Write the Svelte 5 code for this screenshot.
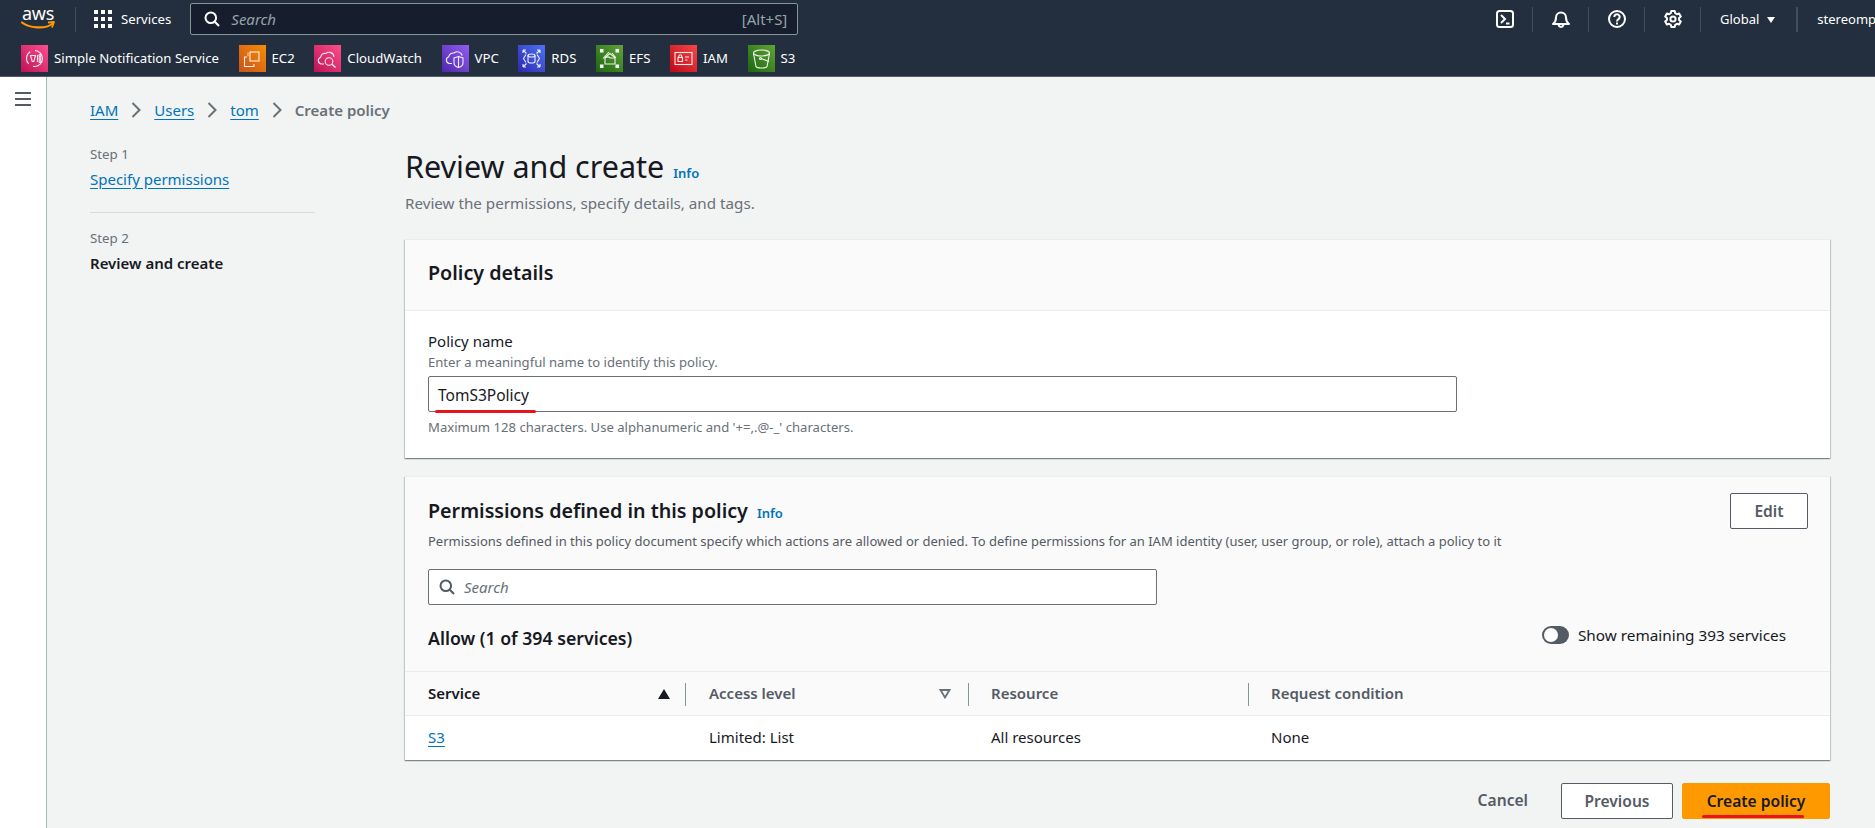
<script>
  const shortcuts = [
    { name: "Simple Notification Service", icon: "sns", from: "#ff4f8b", to: "#bc1356" },
    { name: "EC2", icon: "ec2", from: "#f78e04", to: "#c8511b" },
    { name: "CloudWatch", icon: "cw", from: "#ff4f8b", to: "#bc1356" },
    { name: "VPC", icon: "vpc", from: "#945df2", to: "#4d27aa" },
    { name: "RDS", icon: "rds", from: "#4d72f3", to: "#2e27ad" },
    { name: "EFS", icon: "efs", from: "#60a337", to: "#1b660f" },
    { name: "IAM", icon: "iam", from: "#f54749", to: "#bd0816" },
    { name: "S3", icon: "s3", from: "#60a337", to: "#1b660f" }
  ];

  const columns = [
    { label: "Service", sort: "asc" },
    { label: "Access level", sort: "none" },
    { label: "Resource" },
    { label: "Request condition" }
  ];

  const row = ["S3", "Limited: List", "All resources", "None"];
</script>

<header class="topbar">
  <div class="row-main">
    <div class="logo">
      <span class="logo-text">aws</span>
      <svg class="smile" viewBox="0 0 34 10" width="34" height="10">
        <path d="M1 1.5C8 7 24 8.5 31 3" fill="none" stroke="#f90" stroke-width="2.2" stroke-linecap="round" />
        <path d="M27 1.5l6-.5-2 5.5" fill="none" stroke="#f90" stroke-width="1.8" stroke-linejoin="round" />
      </svg>
    </div>
    <span class="sep sep-logo"></span>
    <svg class="grid-icon" viewBox="0 0 18 18" width="18" height="18" fill="#fff">
      {#each [0, 7, 14] as y}
        {#each [0, 7, 14] as x}
          <rect {x} {y} width="4" height="4" />
        {/each}
      {/each}
    </svg>
    <span class="services">Services</span>
    <div class="global-search">
      <svg viewBox="0 0 16 16" width="16" height="16" fill="none" stroke="#fff" stroke-width="2">
        <circle cx="6.8" cy="6.8" r="5.3" />
        <path d="M10.8 10.8L15 15" />
      </svg>
      <span class="search-text">Search</span>
      <span class="search-key">[Alt+S]</span>
    </div>
    <div class="top-right">
      <svg class="tool" viewBox="0 0 18 18" width="18" height="18" fill="none" stroke="#fff" stroke-width="2">
        <rect x="1" y="1" width="16" height="16" rx="2.5" />
        <path d="M5 5l4 4-4 4" />
        <path d="M10 13.5h3.5" />
      </svg>
      <span class="sep"></span>
      <svg class="tool" viewBox="0 0 18 18" width="18" height="18" fill="none" stroke="#fff" stroke-width="2">
        <path d="M1 14c2-1.5 3-3 3-6.500a5 5 0 0 1 10 0c0 3.500 1 5 3 6.500z" stroke-linejoin="round" />
        <path d="M6.500 15a2.600 2.600 0 0 0 5 0" />
      </svg>
      <span class="sep"></span>
      <svg class="tool" viewBox="0 0 18 18" width="18" height="18" fill="none" stroke="#fff" stroke-width="2">
        <circle cx="9" cy="9" r="8" />
        <path d="M6.300 7a2.700 2.700 0 1 1 4.200 2.200C9.500 9.900 9 10.300 9 11.500" />
        <path d="M9 12.600v1.800" />
      </svg>
      <span class="sep"></span>
      <svg class="tool" viewBox="0 0 18 18" width="18" height="18" fill="none" stroke="#fff" stroke-width="2">
        <circle cx="9" cy="9" r="2.600" />
        <path d="M7.300 1h3.400l.5 2.200 1.700 1 2.200-.7 1.700 3-1.700 1.500v2l1.700 1.500-1.700 3-2.200-.7-1.700 1-.5 2.200H7.300l-.5-2.200-1.700-1-2.200.7-1.700-3L2.900 10V8L1.200 6.500l1.700-3 2.200.7 1.700-1z" stroke-linejoin="round" />
      </svg>
      <span class="sep"></span>
      <span class="region">Global</span>
      <svg class="caret" viewBox="0 0 8 6" width="8" height="6" fill="#fff"><path d="M0 0h8L4 6z" /></svg>
      <span class="sep sep-thick"></span>
      <span class="account">stereomp</span>
    </div>
  </div>
  <nav class="row-shortcuts">
    {#each shortcuts as s}
      <div class="shortcut">
        <span class="svc-icon" style="background: linear-gradient(45deg, {s.to}, {s.from})">
          <svg viewBox="0 0 27 27" width="27" height="27" fill="none" stroke="#fff" stroke-width="1.100" stroke-opacity="0.9">
            {#if s.icon === "sns"}
              <circle cx="13.500" cy="13.500" r="8" stroke-dasharray="14 5" />
              <path d="M9.500 10.500h5l-1.700 6h-1.600zM16.500 10v7" />
              <circle cx="19" cy="10.500" r="1" />
              <circle cx="19" cy="13.500" r="1" />
              <circle cx="19" cy="16.500" r="1" />
            {:else if s.icon === "ec2"}
              <rect x="11" y="7" width="9" height="9" />
              <path d="M8 12H5.500v9.500H15V19" />
              <path d="M8.500 8.500h1M8.500 10.500h1" stroke-width="1.400" />
            {:else if s.icon === "cw"}
              <path d="M10 19H7.500a3.500 3.500 0 0 1-.8-6.800 4 4 0 0 1 5-3.700 5 5 0 0 1 8.300 3.400" />
              <circle cx="15" cy="16.500" r="3.800" />
              <path d="M18 19.200l3.500 3.300" stroke-width="1.500" />
            {:else if s.icon === "vpc"}
              <path d="M10 18.500H7.500a3.500 3.500 0 0 1-.7-6.800 4.500 4.500 0 0 1 5.200-3.700 5 5 0 0 1 8.200 2.500" />
              <path d="M16.500 11.500l4.500 1.500v5c0 2.300-2 3.800-4.500 4.500-2.500-.7-4.500-2.200-4.500-4.500v-5z" />
              <path d="M16.500 11.500v11" />
            {:else if s.icon === "rds"}
              <ellipse cx="13.500" cy="10.500" rx="3.500" ry="1.500" />
              <path d="M10 10.500v6c0 .8 1.500 1.500 3.500 1.500s3.500-.7 3.500-1.500v-6" />
              <path d="M8 9.500l-2.500 4 2.500 4M19 9.500l2.500 4-2.500 4" />
              <path d="M5 5l3.500 3.500M5 5v3M5 5h3M22 5l-3.500 3.500M22 5v3M22 5h-3M5 22l3.500-3.500M5 22v-3M5 22h3M22 22l-3.500-3.500M22 22v-3M22 22h-3" />
            {:else if s.icon === "efs"}
              <path d="M9 19v-6.500l5-4 5 4V19z" />
              <path d="M9 13c2-1.500 4-1.500 5 0h5" />
              <path d="M7 13.500l6-6.500M20 13l-4-5" />
              <rect x="4.500" y="4.500" width="2.500" height="2.500" fill="#fff" />
              <rect x="20" y="4.500" width="2.500" height="2.500" fill="#fff" />
              <rect x="4.500" y="20" width="2.500" height="2.500" fill="#fff" />
              <rect x="20" y="20" width="2.500" height="2.500" fill="#fff" />
            {:else if s.icon === "iam"}
              <rect x="5" y="7.500" width="17" height="12" />
              <rect x="8" y="12.500" width="4.500" height="4" />
              <path d="M8.800 12.500v-1.300a1.400 1.400 0 0 1 2.900 0v1.300" />
              <path d="M15 12h4M15 15h2.500" />
            {:else}
              <path d="M5.500 8.500l2.500 13c.4 1 2.500 1.500 5.500 1.500s5.100-.5 5.500-1.500l2.500-13" />
              <ellipse cx="13.500" cy="8" rx="8" ry="3" />
              <circle cx="12.500" cy="13.500" r="1" />
              <path d="M13 13.500l8 3" />
            {/if}
          </svg>
        </span>
        <span class="svc-name">{s.name}</span>
      </div>
    {/each}
  </nav>
</header>

<div class="shell">
  <aside class="rail">
    <svg viewBox="0 0 16 14" width="16" height="14" fill="#545b64">
      <rect width="16" height="2" />
      <rect y="6" width="16" height="2" />
      <rect y="12" width="16" height="2" />
    </svg>
  </aside>

  <main class="main">
    <div class="crumbs">
      <a href="#iam">IAM</a>
      <svg viewBox="0 0 10 16" width="10" height="16"><path d="M1.500 1l7 7-7 7" /></svg>
      <a href="#users">Users</a>
      <svg viewBox="0 0 10 16" width="10" height="16"><path d="M1.500 1l7 7-7 7" /></svg>
      <a href="#tom">tom</a>
      <svg viewBox="0 0 10 16" width="10" height="16"><path d="M1.500 1l7 7-7 7" /></svg>
      <span class="crumb-current">Create policy</span>
    </div>

    <div class="wizard">
      <ol class="steps">
        <li class="step">
          <small>Step 1</small>
          <a href="#permissions">Specify permissions</a>
        </li>
        <li class="step">
          <small>Step 2</small>
          <strong>Review and create</strong>
        </li>
      </ol>

      <div class="content">
        <div class="page-title">
          <h1>Review and create</h1>
          <a class="info" href="#info">Info</a>
        </div>
        <p class="page-sub">Review the permissions, specify details, and tags.</p>

        <section class="card">
          <div class="card-head">
            <h2>Policy details</h2>
          </div>
          <div class="card-body">
            <div class="field-label">Policy name</div>
            <div class="field-hint">Enter a meaningful name to identify this policy.</div>
            <div class="text-input">
              TomS3Policy
              <span class="mark mark-input"></span>
            </div>
            <div class="field-note">Maximum 128 characters. Use alphanumeric and '+=,.@-_' characters.</div>
          </div>
        </section>

        <section class="card">
          <div class="perm-head">
            <div class="perm-top">
              <div class="perm-text">
                <div class="perm-title">
                  <h2>Permissions defined in this policy</h2>
                  <a class="info" href="#info">Info</a>
                </div>
                <p>Permissions defined in this policy document specify which actions are allowed or denied. To define permissions for an IAM identity (user, user group, or role), attach a policy to it</p>
              </div>
              <button class="btn edit">Edit</button>
            </div>
            <div class="perm-search">
              <svg viewBox="0 0 16 16" width="16" height="16" fill="none" stroke="#545b64" stroke-width="2">
                <circle cx="6.800" cy="6.800" r="5.300" />
                <path d="M10.800 10.800L15 15" />
              </svg>
              <span>Search</span>
            </div>
            <div class="allow-row">
              <h3>Allow (1 of 394 services)</h3>
              <div class="toggle-wrap">
                <span class="toggle"><span class="knob"></span></span>
                <span>Show remaining 393 services</span>
              </div>
            </div>
          </div>

          <div class="table">
            {#each columns as col, i}
              <div class="th" class:first={i === 0} class:sep-left={i > 0}>
                <span>{col.label}</span>
                {#if col.sort === "asc"}
                  <svg viewBox="0 0 12 10" width="12" height="10" fill="#16191f"><path d="M6 0l6 10H0z" /></svg>
                {:else if col.sort === "none"}
                  <svg viewBox="0 0 12 10" width="12" height="10" fill="none" stroke="#687078" stroke-width="1.800"><path d="M1.500 1h9L6 8.500z" /></svg>
                {/if}
              </div>
            {/each}
            {#each row as cell, i}
              <div class="td">
                {#if i === 0}<a href="#s3">{cell}</a>{:else}{cell}{/if}
              </div>
            {/each}
          </div>
        </section>

        <div class="actions">
          <button class="btn-plain">Cancel</button>
          <button class="btn previous">Previous</button>
          <button class="btn primary">
            Create policy
            <span class="mark mark-button"></span>
          </button>
        </div>
      </div>
    </div>
  </main>
</div>

<style>
  :global(body) {
    margin: 0;
    background: #f2f3f3;
    font-family: "Noto Sans", "Open Sans", sans-serif;
    font-size: 15px;
    color: #16191f;
    overflow: hidden;
  }

  h1, h2, h3, p, ol {
    margin: 0;
    padding: 0;
  }

  a {
    color: #0073bb;
    text-underline-offset: 3px;
  }

  .topbar {
    height: 76px;
    background: #232f3e;
    border-bottom: 1px solid #545b64;
    color: #fff;
    overflow: hidden;
  }

  .row-main {
    display: flex;
    align-items: center;
    height: 38px;
    padding-left: 21px;
  }

  .logo {
    position: relative;
    width: 34px;
    height: 26px;
    margin-top: -4px;
  }

  .logo-text {
    display: block;
    font-size: 18px;
    line-height: 18px;
    text-align: center;
    letter-spacing: -0.3px;
  }

  .smile {
    position: absolute;
    left: 0;
    top: 17px;
  }

  .sep {
    flex: none;
    width: 1px;
    height: 25px;
    background: #414d5c;
  }

  .sep-logo {
    margin: 0 18px 0 20px;
  }

  .services {
    margin-left: 9px;
    font-size: 13.2px;
  }

  .global-search {
    display: flex;
    align-items: center;
    box-sizing: border-box;
    width: 608px;
    height: 32px;
    margin-left: 19px;
    padding: 0 10px 0 13px;
    background: #161e2d;
    border: 1px solid #879596;
    border-radius: 2px;
  }

  .search-text {
    margin-left: 11px;
    font-style: italic;
    font-size: 15px;
    color: #95a5a6;
  }

  .search-key {
    margin-left: auto;
    font-size: 15px;
    color: #95a5a6;
  }

  .top-right {
    display: flex;
    align-items: center;
    margin-left: auto;
    width: 379px;
    flex: none;
    overflow: hidden;
    white-space: nowrap;
  }

  .tool {
    flex: none;
    margin-right: 18px;
  }

  .top-right .sep {
    margin-right: 19px;
  }

  .region {
    font-size: 13px;
    margin-left: 0;
  }

  .caret {
    flex: none;
    margin: 1px 21px 0 8px;
  }

  .sep-thick {
    width: 2px;
  }

  .account {
    font-size: 13px;
  }

  .row-shortcuts {
    display: flex;
    padding: 7px 0 0 21px;
    gap: 19.6px;
  }

  .shortcut {
    display: flex;
    align-items: center;
    gap: 6px;
  }

  .svc-icon {
    display: block;
    width: 27px;
    height: 27px;
  }

  .svc-icon svg {
    display: block;
  }

  .svc-name {
    font-size: 13.2px;
    white-space: nowrap;
    margin-top: -2px;
  }

  .shell {
    display: flex;
    height: 751px;
  }

  .rail {
    flex: none;
    box-sizing: border-box;
    width: 47px;
    padding: 15px 0 0 15px;
    background: #fff;
    border-right: 1px solid #aab7b8;
  }

  .rail svg {
    display: block;
  }

  .main {
    flex: 1;
    min-width: 0;
    padding: 21px 45px 0 43px;
  }

  .crumbs {
    display: flex;
    align-items: center;
    height: 24px;
    font-size: 15px;
  }

  .crumbs svg {
    flex: none;
    margin: 0 13px;
    fill: none;
    stroke: #687078;
    stroke-width: 2;
  }

  .crumb-current {
    font-weight: 600;
    color: #687078;
  }

  .wizard {
    display: grid;
    grid-template-columns: 225px 1fr;
    column-gap: 90px;
    margin-top: 24px;
  }

  .steps {
    list-style: none;
    margin-top: -1px;
  }

  .step {
    display: flex;
    flex-direction: column;
  }

  .step:first-child {
    padding-bottom: 23px;
    border-bottom: 1px solid #d5dbdb;
    margin-bottom: 16px;
  }

  .step small {
    font-size: 13.3px;
    line-height: 18px;
    color: #687078;
  }

  .step a, .step strong {
    margin-top: 6px;
    font-size: 15px;
    line-height: 20px;
    align-self: flex-start;
  }

  .step strong {
    font-weight: 600;
  }

  .content {
    padding-top: 2px;
  }

  .page-title {
    display: flex;
    align-items: baseline;
    gap: 9px;
  }

  h1 {
    font-size: 30.5px;
    line-height: 36px;
    font-weight: 400;
  }

  .info {
    font-size: 13px;
    font-weight: 600;
    text-decoration: none;
  }

  .page-sub {
    margin-top: 9px;
    font-size: 15.2px;
    line-height: 20px;
    color: #687078;
  }

  .card {
    margin-bottom: 18px;
    background: #fff;
    border-top: 1px solid #eaeded;
    box-shadow: 0 1px 1px 0 rgba(0, 28, 36, 0.3), 1px 1px 1px 0 rgba(0, 28, 36, 0.15), -1px 1px 1px 0 rgba(0, 28, 36, 0.15);
  }

  .page-sub + .card {
    margin-top: 26px;
  }

  .card-head {
    box-sizing: border-box;
    height: 71px;
    padding: 22px 23px 0;
    background: #fafafa;
    border-bottom: 1px solid #eaeded;
  }

  h2 {
    font-size: 19.7px;
    line-height: 22px;
    font-weight: 600;
  }

  .card-body {
    padding: 20px 23px 23px;
  }

  .field-label {
    font-size: 15px;
    line-height: 20px;
  }

  .field-hint, .field-note {
    font-size: 13.1px;
    line-height: 16px;
    color: #687078;
  }

  .field-hint {
    margin-top: 3px;
  }

  .field-note {
    margin-top: 7px;
  }

  .text-input {
    position: relative;
    box-sizing: border-box;
    display: flex;
    align-items: center;
    width: 1029px;
    height: 36px;
    margin-top: 6px;
    padding: 2px 0 0 9px;
    background: #fff;
    border: 1px solid #687078;
    border-radius: 2px;
    font-size: 15.5px;
  }

  .mark {
    position: absolute;
    height: 3px;
    border-radius: 2px;
    background: #e8141c;
  }

  .mark-input {
    left: 6px;
    bottom: -2px;
    width: 101px;
  }

  .mark-button {
    left: 19px;
    bottom: 0;
    width: 102px;
  }

  .perm-head {
    padding: 16px 22px 0 23px;
    background: #fafafa;
    height: 195px;
    box-sizing: border-box;
    border-bottom: 1px solid #eaeded;
  }

  .perm-top {
    display: flex;
    justify-content: space-between;
    align-items: flex-start;
  }

  .perm-text {
    padding-top: 7px;
  }

  .perm-title {
    display: flex;
    align-items: baseline;
    gap: 9px;
  }

  .perm-text p {
    margin-top: 10px;
    font-size: 13px;
    line-height: 18px;
    color: #545b64;
  }

  .btn {
    box-sizing: border-box;
    height: 36px;
    padding-bottom: 2px;
    background: #fff;
    border: 1px solid #545b64;
    border-radius: 2px;
    font: 600 15.6px "Noto Sans", sans-serif;
    color: #545b64;
  }

  .edit {
    width: 78px;
  }

  .perm-search {
    display: flex;
    align-items: center;
    gap: 9px;
    box-sizing: border-box;
    width: 729px;
    height: 36px;
    margin-top: 19px;
    padding-left: 10px;
    background: #fff;
    border: 1px solid #687078;
    border-radius: 2px;
    font-style: italic;
    color: #687078;
  }

  .allow-row {
    display: flex;
    justify-content: space-between;
    align-items: center;
    height: 26px;
    margin-top: 20px;
    padding-right: 22px;
  }

  h3 {
    font-size: 17.7px;
    font-weight: 600;
  }

  .toggle-wrap {
    display: flex;
    align-items: center;
    gap: 9px;
    margin-top: -6px;
    font-size: 15.3px;
  }

  .toggle {
    display: block;
    width: 27px;
    height: 18px;
    border-radius: 9px;
    background: #545b64;
    position: relative;
  }

  .knob {
    position: absolute;
    left: 2px;
    top: 2px;
    width: 14px;
    height: 14px;
    border-radius: 50%;
    background: #fff;
  }

  .table {
    display: grid;
    grid-template-columns: 280px 283px 280px 1fr;
  }

  .th {
    position: relative;
    display: flex;
    align-items: center;
    justify-content: space-between;
    box-sizing: border-box;
    height: 44px;
    padding: 0 23px;
    background: #fafafa;
    border-bottom: 1px solid #eaeded;
    font-weight: 600;
    color: #545b64;
  }

  .th span {
    margin-top: -2px;
  }

  .th.first {
    color: #16191f;
    padding-right: 15px;
  }

  .th:nth-child(2) {
    padding-left: 24px;
    padding-right: 17px;
  }

  .th.sep-left::before {
    content: "";
    position: absolute;
    left: 0;
    top: 11px;
    height: 23px;
    width: 1px;
    background: #879596;
  }

  .td {
    box-sizing: border-box;
    height: 44px;
    padding: 0 23px 2px;
    display: flex;
    align-items: center;
  }

  .td:nth-child(6) {
    padding-left: 24px;
  }

  .actions {
    display: flex;
    justify-content: flex-end;
    align-items: center;
    gap: 9px;
    margin-top: 23px;
  }

  .btn-plain {
    margin-right: 24px;
    padding: 0 0 2px;
    border: 0;
    background: none;
    font: 600 15.6px "Noto Sans", sans-serif;
    color: #545b64;
  }

  .previous {
    width: 112px;
  }

  .primary {
    position: relative;
    width: 148px;
    background: #f90;
    border-color: #f90;
    color: #16191f;
  }
</style>
